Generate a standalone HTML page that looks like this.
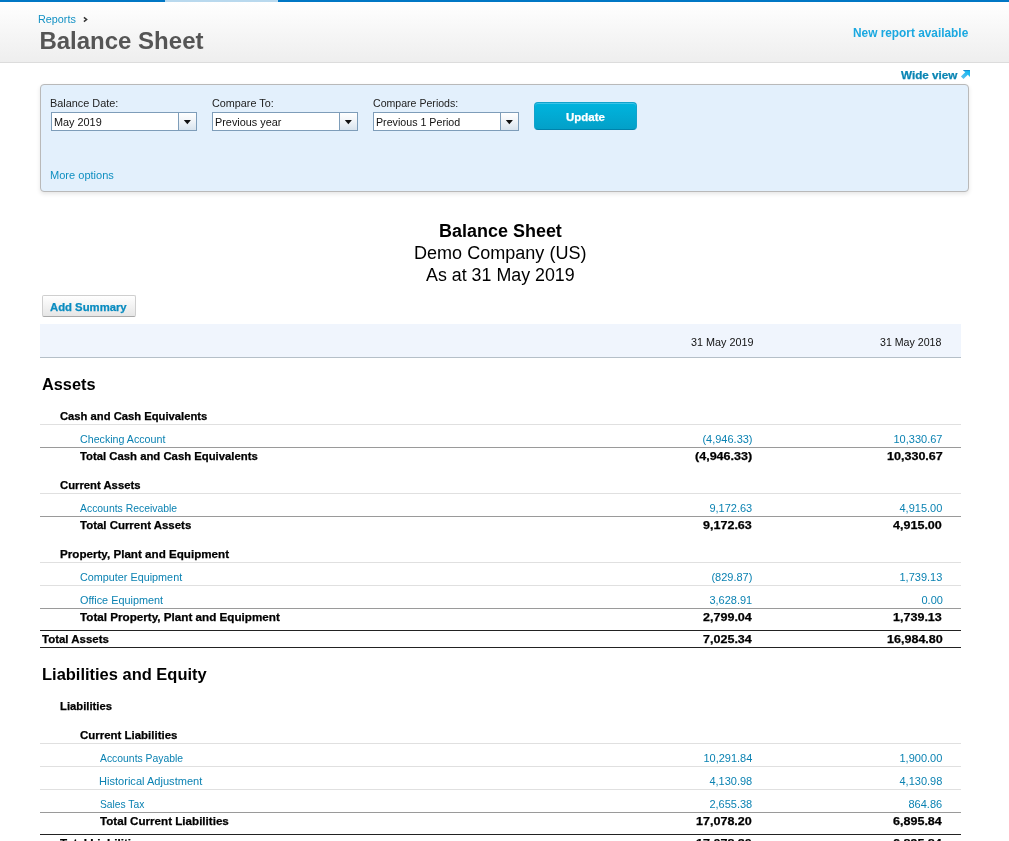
<!DOCTYPE html>
<html><head><meta charset="utf-8">
<style>
html,body{margin:0;padding:0;background:#fff;}
body{width:1009px;height:841px;overflow:hidden;position:relative;-webkit-font-smoothing:antialiased;will-change:transform;font-family:"Liberation Sans",sans-serif;color:#000;}
.a{position:absolute;white-space:nowrap;}
</style></head><body>
<div class="a" style="left:0;top:0;width:1009px;height:2px;background:#0077c5"></div>
<div class="a" style="left:165px;top:0;width:113px;height:2px;background:#b9d9ee"></div>
<div class="a" style="left:0;top:2px;width:1009px;height:60px;background:linear-gradient(#fff,#eee);border-bottom:1px solid #dcdcdc"></div>
<div class="a" style="left:40px;top:84px;width:927px;height:106px;background:#e3f0fc;border:1px solid #b9b9b9;border-radius:4px;box-shadow:0 2px 4px rgba(0,0,0,.1)"></div>
<div class="a" style="left:51px;top:112px;width:144px;height:17px;border:1px solid #7e9db9;background:#fff"></div><div class="a" style="left:178px;top:113px;width:17px;height:17px;border-left:1px solid #7e9db9;background:linear-gradient(#fff 0%,#f3f6f9 40%,#d9e4ee 100%)"></div><svg class="a" style="left:183px;top:120px" width="8" height="5"><polygon points="0.8,0 7.9,0 4.35,4.2" fill="#111"/></svg><div class="a" style="left:212px;top:112px;width:144px;height:17px;border:1px solid #7e9db9;background:#fff"></div><div class="a" style="left:339px;top:113px;width:17px;height:17px;border-left:1px solid #7e9db9;background:linear-gradient(#fff 0%,#f3f6f9 40%,#d9e4ee 100%)"></div><svg class="a" style="left:344px;top:120px" width="8" height="5"><polygon points="0.8,0 7.9,0 4.35,4.2" fill="#111"/></svg><div class="a" style="left:373px;top:112px;width:144px;height:17px;border:1px solid #7e9db9;background:#fff"></div><div class="a" style="left:500px;top:113px;width:17px;height:17px;border-left:1px solid #7e9db9;background:linear-gradient(#fff 0%,#f3f6f9 40%,#d9e4ee 100%)"></div><svg class="a" style="left:505px;top:120px" width="8" height="5"><polygon points="0.8,0 7.9,0 4.35,4.2" fill="#111"/></svg>
<div class="a" style="left:534px;top:102px;width:101px;height:26px;border-radius:4px;border:1px solid #12a2cc;border-bottom-color:#0082ab;background:linear-gradient(#00b4de,#03a0c8);box-shadow:inset 0 1px 0 #3cc4e8"></div>
<div class="a" style="left:42px;top:295px;width:92px;height:20px;border:1px solid #cfcfcf;border-bottom-color:#a9a9a9;border-radius:2px;background:linear-gradient(#fff,#e6e6e6)"></div>
<div class="a" style="left:40px;top:324px;width:921px;height:33px;background:#f0f5fd;border-bottom:1px solid #b5bfc8"></div>
<div class="a" style="left:40px;top:424px;width:921px;height:1px;background:#e0e0e0"></div>
<div class="a" style="left:40px;top:447px;width:921px;height:1px;background:#9a9a9a"></div>
<div class="a" style="left:40px;top:493px;width:921px;height:1px;background:#e0e0e0"></div>
<div class="a" style="left:40px;top:516px;width:921px;height:1px;background:#9a9a9a"></div>
<div class="a" style="left:40px;top:562px;width:921px;height:1px;background:#e0e0e0"></div>
<div class="a" style="left:40px;top:585px;width:921px;height:1px;background:#e0e0e0"></div>
<div class="a" style="left:40px;top:608px;width:921px;height:1px;background:#9a9a9a"></div>
<div class="a" style="left:40px;top:630px;width:921px;height:1px;background:#222"></div>
<div class="a" style="left:40px;top:647px;width:921px;height:1px;background:#222"></div>
<div class="a" style="left:40px;top:743px;width:921px;height:1px;background:#e0e0e0"></div>
<div class="a" style="left:40px;top:766px;width:921px;height:1px;background:#e0e0e0"></div>
<div class="a" style="left:40px;top:789px;width:921px;height:1px;background:#e0e0e0"></div>
<div class="a" style="left:40px;top:812px;width:921px;height:1px;background:#9a9a9a"></div>
<div class="a" style="left:40px;top:834px;width:921px;height:1px;background:#222"></div>
<div class="a" style="left:38.42px;top:14px;font-size:11px;line-height:11px;font-weight:normal;letter-spacing:0px;color:#1391c4;transform:scaleX(0.9838);transform-origin:0 0;">Reports</div>
<div class="a" style="left:39.40px;top:29px;font-size:24px;line-height:24px;font-weight:bold;letter-spacing:0px;color:#555;">Balance Sheet</div>
<div class="a" style="left:852.80px;top:27px;font-size:12px;line-height:12px;font-weight:bold;letter-spacing:0px;color:#1aa8e0;transform:scaleX(0.9872);transform-origin:0 0;">New report available</div>
<div class="a" style="left:900.70px;top:70px;font-size:11px;line-height:11px;font-weight:bold;letter-spacing:0px;color:#0a85b3;transform:scaleX(1.0623);transform-origin:0 0;-webkit-text-stroke:0.25px #0a85b3;">Wide view</div>
<div class="a" style="left:50.01px;top:98px;font-size:11px;line-height:11px;font-weight:normal;letter-spacing:0px;color:#222;transform:scaleX(0.9896);transform-origin:0 0;">Balance Date:</div>
<div class="a" style="left:211.70px;top:98px;font-size:11px;line-height:11px;font-weight:normal;letter-spacing:0px;color:#222;transform:scaleX(0.9823);transform-origin:0 0;">Compare To:</div>
<div class="a" style="left:372.70px;top:98px;font-size:11px;line-height:11px;font-weight:normal;letter-spacing:0px;color:#222;transform:scaleX(0.9614);transform-origin:0 0;">Compare Periods:</div>
<div class="a" style="left:53.81px;top:117px;font-size:11px;line-height:11px;font-weight:normal;letter-spacing:0px;color:#111;transform:scaleX(0.9872);transform-origin:0 0;">May 2019</div>
<div class="a" style="left:214.51px;top:117px;font-size:11px;line-height:11px;font-weight:normal;letter-spacing:0px;color:#111;transform:scaleX(0.9864);transform-origin:0 0;">Previous year</div>
<div class="a" style="left:375.53px;top:117px;font-size:11px;line-height:11px;font-weight:normal;letter-spacing:0px;color:#111;transform:scaleX(0.9698);transform-origin:0 0;">Previous 1 Period</div>
<div class="a" style="left:50.00px;top:170px;font-size:11px;line-height:11px;font-weight:normal;letter-spacing:0px;color:#0f8fc0;transform:scaleX(1.0048);transform-origin:0 0;">More options</div>
<div class="a" style="left:565.70px;top:112px;font-size:11px;line-height:11px;font-weight:bold;letter-spacing:0px;color:#fff;transform:scaleX(1.0459);transform-origin:0 0;-webkit-text-stroke:0.25px #fff;">Update</div>
<div class="a" style="left:438.70px;top:222px;font-size:18px;line-height:18px;font-weight:bold;letter-spacing:0px;color:#000;transform:scaleX(0.9984);transform-origin:0 0;">Balance Sheet</div>
<div class="a" style="left:413.90px;top:244px;font-size:18px;line-height:18px;font-weight:normal;letter-spacing:0px;color:#000;transform:scaleX(1.0024);transform-origin:0 0;">Demo Company (US)</div>
<div class="a" style="left:425.80px;top:266px;font-size:18px;line-height:18px;font-weight:normal;letter-spacing:0px;color:#000;transform:scaleX(0.9907);transform-origin:0 0;">As at 31 May 2019</div>
<div class="a" style="left:50.00px;top:302px;font-size:11px;line-height:11px;font-weight:bold;letter-spacing:0px;color:#0a8cc0;transform:scaleX(1.0280);transform-origin:0 0;-webkit-text-stroke:0.25px #0a8cc0;">Add Summary</div>
<div class="a" style="left:690.50px;top:337px;font-size:11px;line-height:11px;font-weight:normal;letter-spacing:0px;color:#111;transform:scaleX(0.9810);transform-origin:0 0;">31 May 2019</div>
<div class="a" style="left:880.40px;top:337px;font-size:11px;line-height:11px;font-weight:normal;letter-spacing:0px;color:#111;transform:scaleX(0.9656);transform-origin:0 0;">31 May 2018</div>
<div class="a" style="left:42.40px;top:377px;font-size:16px;line-height:16px;font-weight:bold;letter-spacing:0px;color:#000;transform:scaleX(1.0192);transform-origin:0 0;">Assets</div>
<div class="a" style="left:41.97px;top:667px;font-size:16px;line-height:16px;font-weight:bold;letter-spacing:0px;color:#000;transform:scaleX(1.0289);transform-origin:0 0;">Liabilities and Equity</div>
<div class="a" style="left:60.00px;top:411px;font-size:11px;line-height:11px;font-weight:bold;letter-spacing:0px;color:#000;transform:scaleX(1.0208);transform-origin:0 0;-webkit-text-stroke:0.25px #000;">Cash and Cash Equivalents</div>
<div class="a" style="left:80.00px;top:434px;font-size:11px;line-height:11px;font-weight:normal;letter-spacing:0px;color:#0b82b2;transform:scaleX(0.9693);transform-origin:0 0;">Checking Account</div>
<div class="a" style="left:702.40px;top:434px;font-size:11px;line-height:11px;font-weight:normal;letter-spacing:0px;color:#0b82b2;">(4,946.33)</div>
<div class="a" style="left:893.50px;top:434px;font-size:11px;line-height:11px;font-weight:normal;letter-spacing:0px;color:#0b82b2;">10,330.67</div>
<div class="a" style="left:80.00px;top:451px;font-size:11px;line-height:11px;font-weight:bold;letter-spacing:0px;color:#000;transform:scaleX(1.0289);transform-origin:0 0;-webkit-text-stroke:0.25px #000;">Total Cash and Cash Equivalents</div>
<div class="a" style="left:695.30px;top:451px;font-size:11px;line-height:11px;font-weight:bold;letter-spacing:0px;color:#000;transform:scaleX(1.1400);transform-origin:0 0;-webkit-text-stroke:0.25px #000;">(4,946.33)</div>
<div class="a" style="left:886.64px;top:451px;font-size:11px;line-height:11px;font-weight:bold;letter-spacing:0px;color:#000;transform:scaleX(1.1400);transform-origin:0 0;-webkit-text-stroke:0.25px #000;">10,330.67</div>
<div class="a" style="left:60.00px;top:480px;font-size:11px;line-height:11px;font-weight:bold;letter-spacing:0px;color:#000;transform:scaleX(1.0256);transform-origin:0 0;-webkit-text-stroke:0.25px #000;">Current Assets</div>
<div class="a" style="left:80.00px;top:503px;font-size:11px;line-height:11px;font-weight:normal;letter-spacing:0px;color:#0b82b2;transform:scaleX(0.9456);transform-origin:0 0;">Accounts Receivable</div>
<div class="a" style="left:709.40px;top:503px;font-size:11px;line-height:11px;font-weight:normal;letter-spacing:0px;color:#0b82b2;">9,172.63</div>
<div class="a" style="left:899.50px;top:503px;font-size:11px;line-height:11px;font-weight:normal;letter-spacing:0px;color:#0b82b2;">4,915.00</div>
<div class="a" style="left:80.00px;top:520px;font-size:11px;line-height:11px;font-weight:bold;letter-spacing:0px;color:#000;transform:scaleX(1.0402);transform-origin:0 0;-webkit-text-stroke:0.25px #000;">Total Current Assets</div>
<div class="a" style="left:703.28px;top:520px;font-size:11px;line-height:11px;font-weight:bold;letter-spacing:0px;color:#000;transform:scaleX(1.1400);transform-origin:0 0;-webkit-text-stroke:0.25px #000;">9,172.63</div>
<div class="a" style="left:893.48px;top:520px;font-size:11px;line-height:11px;font-weight:bold;letter-spacing:0px;color:#000;transform:scaleX(1.1400);transform-origin:0 0;-webkit-text-stroke:0.25px #000;">4,915.00</div>
<div class="a" style="left:60.00px;top:549px;font-size:11px;line-height:11px;font-weight:bold;letter-spacing:0px;color:#000;transform:scaleX(1.0569);transform-origin:0 0;-webkit-text-stroke:0.25px #000;">Property, Plant and Equipment</div>
<div class="a" style="left:80.00px;top:572px;font-size:11px;line-height:11px;font-weight:normal;letter-spacing:0px;color:#0b82b2;transform:scaleX(0.9827);transform-origin:0 0;">Computer Equipment</div>
<div class="a" style="left:711.40px;top:572px;font-size:11px;line-height:11px;font-weight:normal;letter-spacing:0px;color:#0b82b2;">(829.87)</div>
<div class="a" style="left:899.50px;top:572px;font-size:11px;line-height:11px;font-weight:normal;letter-spacing:0px;color:#0b82b2;">1,739.13</div>
<div class="a" style="left:80.00px;top:595px;font-size:11px;line-height:11px;font-weight:normal;letter-spacing:0px;color:#0b82b2;transform:scaleX(0.9869);transform-origin:0 0;">Office Equipment</div>
<div class="a" style="left:709.40px;top:595px;font-size:11px;line-height:11px;font-weight:normal;letter-spacing:0px;color:#0b82b2;">3,628.91</div>
<div class="a" style="left:921.50px;top:595px;font-size:11px;line-height:11px;font-weight:normal;letter-spacing:0px;color:#0b82b2;">0.00</div>
<div class="a" style="left:80.00px;top:612px;font-size:11px;line-height:11px;font-weight:bold;letter-spacing:0px;color:#000;transform:scaleX(1.0603);transform-origin:0 0;-webkit-text-stroke:0.25px #000;">Total Property, Plant and Equipment</div>
<div class="a" style="left:703.28px;top:612px;font-size:11px;line-height:11px;font-weight:bold;letter-spacing:0px;color:#000;transform:scaleX(1.1400);transform-origin:0 0;-webkit-text-stroke:0.25px #000;">2,799.04</div>
<div class="a" style="left:893.48px;top:612px;font-size:11px;line-height:11px;font-weight:bold;letter-spacing:0px;color:#000;transform:scaleX(1.1400);transform-origin:0 0;-webkit-text-stroke:0.25px #000;">1,739.13</div>
<div class="a" style="left:42.00px;top:634px;font-size:11px;line-height:11px;font-weight:bold;letter-spacing:0px;color:#000;transform:scaleX(1.0422);transform-origin:0 0;-webkit-text-stroke:0.25px #000;">Total Assets</div>
<div class="a" style="left:703.28px;top:634px;font-size:11px;line-height:11px;font-weight:bold;letter-spacing:0px;color:#000;transform:scaleX(1.1400);transform-origin:0 0;-webkit-text-stroke:0.25px #000;">7,025.34</div>
<div class="a" style="left:886.64px;top:634px;font-size:11px;line-height:11px;font-weight:bold;letter-spacing:0px;color:#000;transform:scaleX(1.1400);transform-origin:0 0;-webkit-text-stroke:0.25px #000;">16,984.80</div>
<div class="a" style="left:60.00px;top:701px;font-size:11px;line-height:11px;font-weight:bold;letter-spacing:0px;color:#000;transform:scaleX(1.0235);transform-origin:0 0;-webkit-text-stroke:0.25px #000;">Liabilities</div>
<div class="a" style="left:80.00px;top:730px;font-size:11px;line-height:11px;font-weight:bold;letter-spacing:0px;color:#000;transform:scaleX(1.0415);transform-origin:0 0;-webkit-text-stroke:0.25px #000;">Current Liabilities</div>
<div class="a" style="left:100.00px;top:753px;font-size:11px;line-height:11px;font-weight:normal;letter-spacing:0px;color:#0b82b2;transform:scaleX(0.9443);transform-origin:0 0;">Accounts Payable</div>
<div class="a" style="left:703.40px;top:753px;font-size:11px;line-height:11px;font-weight:normal;letter-spacing:0px;color:#0b82b2;">10,291.84</div>
<div class="a" style="left:899.50px;top:753px;font-size:11px;line-height:11px;font-weight:normal;letter-spacing:0px;color:#0b82b2;">1,900.00</div>
<div class="a" style="left:98.99px;top:776px;font-size:11px;line-height:11px;font-weight:normal;letter-spacing:0px;color:#0b82b2;transform:scaleX(1.0059);transform-origin:0 0;">Historical Adjustment</div>
<div class="a" style="left:709.40px;top:776px;font-size:11px;line-height:11px;font-weight:normal;letter-spacing:0px;color:#0b82b2;">4,130.98</div>
<div class="a" style="left:899.50px;top:776px;font-size:11px;line-height:11px;font-weight:normal;letter-spacing:0px;color:#0b82b2;">4,130.98</div>
<div class="a" style="left:100.00px;top:799px;font-size:11px;line-height:11px;font-weight:normal;letter-spacing:0px;color:#0b82b2;transform:scaleX(0.9340);transform-origin:0 0;">Sales Tax</div>
<div class="a" style="left:709.40px;top:799px;font-size:11px;line-height:11px;font-weight:normal;letter-spacing:0px;color:#0b82b2;">2,655.38</div>
<div class="a" style="left:908.50px;top:799px;font-size:11px;line-height:11px;font-weight:normal;letter-spacing:0px;color:#0b82b2;">864.86</div>
<div class="a" style="left:100.00px;top:816px;font-size:11px;line-height:11px;font-weight:bold;letter-spacing:0px;color:#000;transform:scaleX(1.0557);transform-origin:0 0;-webkit-text-stroke:0.25px #000;">Total Current Liabilities</div>
<div class="a" style="left:696.44px;top:816px;font-size:11px;line-height:11px;font-weight:bold;letter-spacing:0px;color:#000;transform:scaleX(1.1400);transform-origin:0 0;-webkit-text-stroke:0.25px #000;">17,078.20</div>
<div class="a" style="left:893.48px;top:816px;font-size:11px;line-height:11px;font-weight:bold;letter-spacing:0px;color:#000;transform:scaleX(1.1400);transform-origin:0 0;-webkit-text-stroke:0.25px #000;">6,895.84</div>
<div class="a" style="left:60.00px;top:838px;font-size:11px;line-height:11px;font-weight:bold;letter-spacing:0px;color:#000;transform:scaleX(1.0600);transform-origin:0 0;-webkit-text-stroke:0.25px #000;">Total Liabilities</div>
<div class="a" style="left:696.44px;top:838px;font-size:11px;line-height:11px;font-weight:bold;letter-spacing:0px;color:#000;transform:scaleX(1.1400);transform-origin:0 0;-webkit-text-stroke:0.25px #000;">17,078.20</div>
<div class="a" style="left:893.48px;top:838px;font-size:11px;line-height:11px;font-weight:bold;letter-spacing:0px;color:#000;transform:scaleX(1.1400);transform-origin:0 0;-webkit-text-stroke:0.25px #000;">6,895.84</div>
<svg class="a" style="left:82px;top:15px" width="7" height="9" viewBox="0 0 7 9"><path d="M1.9 2.4 L4.6 4.5 L1.9 6.6" fill="none" stroke="#333" stroke-width="1.5"/></svg>
<svg class="a" style="left:955px;top:65px" width="20" height="20" viewBox="0 0 20 20"><defs><linearGradient id="ag" x1="1" y1="0" x2="0" y2="1"><stop offset="0" stop-color="#00b4f0"/><stop offset="1" stop-color="#6cc3ef"/></linearGradient></defs><polygon points="8,5 15,5 15,12 12.8,9.8 8.5,14.1 5.9,11.5 10.2,7.2" fill="url(#ag)"/><polygon points="8,5 15,5 14.2,6 8.9,6" fill="#1878c0" opacity="0.7"/></svg>
</body></html>
